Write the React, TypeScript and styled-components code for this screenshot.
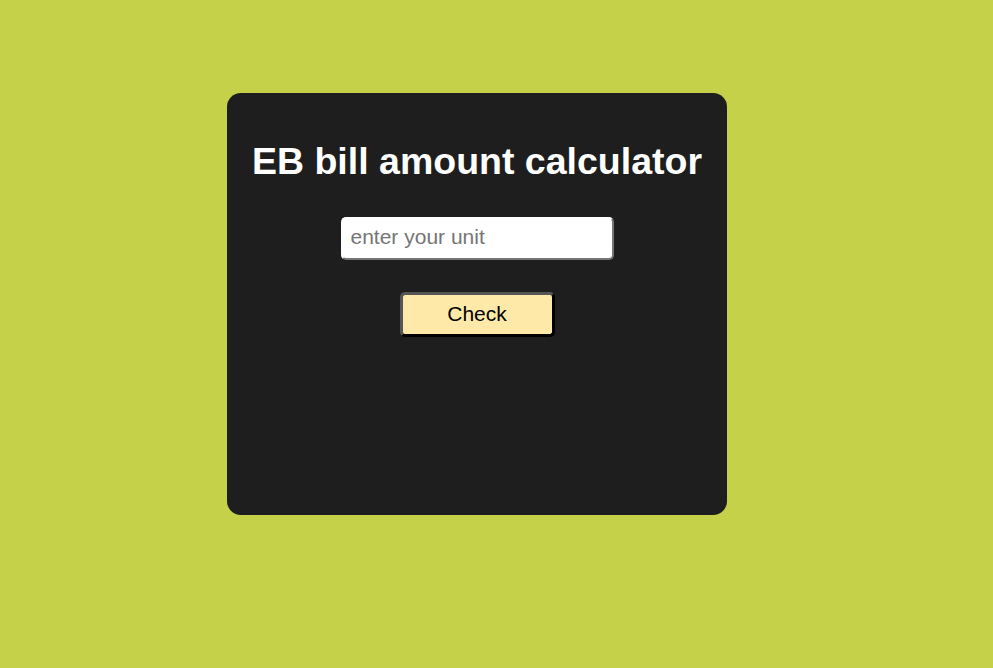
import { FC, useState } from "react"
import styled, { createGlobalStyle } from "styled-components"

const GlobalStyle = createGlobalStyle`
    html, body {
        margin:0;
        padding:0;
        background:#c5d148;
        font-family:"Liberation Sans", Arial, sans-serif;
    }
`

const Page = styled.div`
    min-height:668px;
    padding:93px 0 0 227px;
    box-sizing:border-box;
`

const Card = styled.div`
    width:500px;
    height:422px;
    box-sizing:border-box;
    background:#1e1e1e;
    border-radius:14px;
    display:flex;
    flex-direction:column;
    align-items:center;
    padding-top:44px;
`

const Title = styled.h1`
    margin:0;
    color:#ffffff;
    font-size:37.5px;
    font-weight:700;
    line-height:48px;
    white-space:nowrap;
`

const UnitInput = styled.input`
    margin-top:32px;
    width:273px;
    height:43px;
    box-sizing:border-box;
    padding:0 8px 3px;
    border:2px solid;
    border-color:#ffffff #767676 #767676 #ffffff;
    border-radius:5px;
    background:#ffffff;
    font-family:"Liberation Sans", Arial, sans-serif;
    font-size:21px;
    color:#000;
    outline:none;

    &::placeholder{
        color:#757575;
    }
`

const CheckButton = styled.button`
    margin-top:32px;
    width:155px;
    height:45px;
    box-sizing:border-box;
    padding:0 0 2px;
    border:3px solid;
    border-color:#555555 #000000 #000000 #555555;
    border-radius:5px;
    background:#ffe9a8;
    color:#000;
    font-family:"Liberation Sans", Arial, sans-serif;
    font-size:21px;
    cursor:pointer;
`

const App:FC = () => {
    const [unit, setUnit] = useState('')

    return (
        <Page>
            <GlobalStyle />
            <Card>
                <Title>EB bill amount calculator</Title>
                <UnitInput
                    type="text"
                    placeholder="enter your unit"
                    value={unit}
                    onChange={(e) => setUnit(e.target.value)}
                />
                <CheckButton>Check</CheckButton>
            </Card>
        </Page>
    )
}

export default App
